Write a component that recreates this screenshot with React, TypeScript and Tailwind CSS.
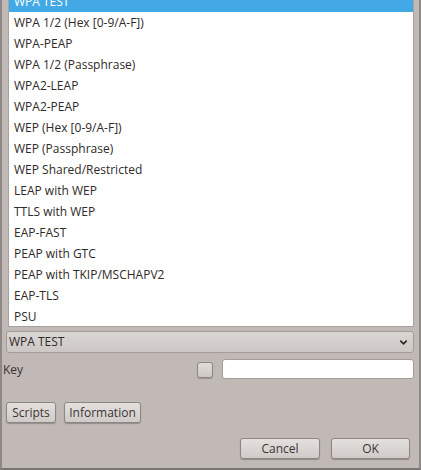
import { ChevronDown } from "lucide-react";

const items = [
  "WPA TEST",
  "WPA 1/2 (Hex [0-9/A-F])",
  "WPA-PEAP",
  "WPA 1/2 (Passphrase)",
  "WPA2-LEAP",
  "WPA2-PEAP",
  "WEP (Hex [0-9/A-F])",
  "WEP (Passphrase)",
  "WEP Shared/Restricted",
  "LEAP with WEP",
  "TTLS with WEP",
  "EAP-FAST",
  "PEAP with GTC",
  "PEAP with TKIP/MSCHAPV2",
  "EAP-TLS",
  "PSU",
];

function Btn({ label, w }: { label: string; w: string }) {
  return (
    <button
      className={`${w} h-[21px] rounded-[3px] border border-[#8d8784] bg-gradient-to-b from-[#e4e0de] to-[#d0cbc8] text-[12px] text-[#3a3532] shadow-[0_1px_1px_rgba(0,0,0,0.25)] flex items-center justify-center`}
    >
      {label}
    </button>
  );
}

export default function App() {
  return (
    <div
      className="w-[421px] h-[470px] bg-[#c0b9b6] overflow-hidden border-l-2 border-l-[#8e8886] border-b-2 border-b-[#7b7573] border-r-2 border-r-[#8e8886] flex flex-col text-[#3a3532]"
      style={{ fontFamily: '"Open Sans", "DejaVu Sans", sans-serif' }}
    >
      {/* dropdown list */}
      <div className="ml-[6px] w-[406px] h-[327px] shrink-0 bg-white border border-[#a8a29f] border-t-0 overflow-hidden">
        <div className="mt-[-9px]">
          {items.map((t, i) => (
            <div
              key={t}
              className={`h-[21px] pl-[5px] flex items-center text-[12px] ${
                i === 0 ? "bg-[#42a9e6] text-white" : "text-[#2e2a28]"
              }`}
            >
              {t}
            </div>
          ))}
        </div>
      </div>

      {/* combo */}
      <div className="mt-[4px] ml-[4px] w-[408px] h-[22px] rounded-[3px] border border-[#a39d9a] bg-gradient-to-b from-[#dad6d3] to-[#cdc8c5] flex items-center justify-between pl-[2px] pr-[4px] text-[12px] text-[#2e2a28]">
        <span>WPA TEST</span>
        <ChevronDown size={11} strokeWidth={3.5} className="text-[#2e2a28]" />
      </div>

      {/* key row */}
      <div className="mt-[6px] h-[20px] flex items-center">
        <span className="ml-[1px] mt-[2px] text-[12px]">Key</span>
        <div className="ml-auto mt-[2px] w-[16px] h-[16px] rounded-[3px] border border-[#8d8784] bg-gradient-to-b from-[#e0dcda] to-[#cdc8c5] shadow-[0_1px_1px_rgba(0,0,0,0.2)]" />
        <div className="ml-[9px] mr-[5px] w-[192px] h-[20px] rounded-[3px] border border-[#a39d9a] bg-white" />
      </div>

      {/* scripts / information */}
      <div className="mt-[23px] ml-[4px] flex gap-[8px]">
        <Btn label="Scripts" w="w-[50px]" />
        <Btn label="Information" w="w-[77px]" />
      </div>

      {/* cancel / ok */}
      <div className="mt-[15px] flex justify-end gap-[11px] mr-[9px]">
        <Btn label="Cancel" w="w-[80px]" />
        <Btn label="OK" w="w-[79px]" />
      </div>
    </div>
  );
}
